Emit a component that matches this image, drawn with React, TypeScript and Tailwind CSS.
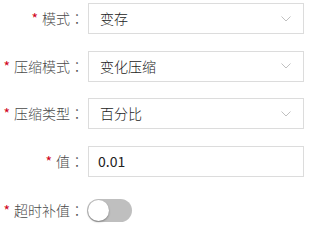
const font = { fontFamily: '"Noto Sans CJK SC", "Noto Sans", sans-serif' }

function Label({ text }: { text: string }) {
  return (
    <label className="w-[88px] shrink-0 text-right pr-1 text-[14px] font-light text-[#4a4a4a] whitespace-nowrap">
      <span className="text-[#d0021b] font-normal mr-1">*</span>
      {text}
      <span style={{ fontFamily: '"Noto Sans CJK TC", sans-serif' }}>：</span>
    </label>
  )
}

function SelectBox({ value }: { value: string }) {
  return (
    <div className="flex items-center justify-between w-[216px] h-[31px] border border-[#dcdcdc] bg-white pl-[11px] pr-[12px] text-[14px] font-light text-[#222]">
      <span>{value}</span>
      <svg width="10" height="6" viewBox="0 0 10 6" fill="none">
        <path d="M0.5 0.5 L5 5 L9.5 0.5" stroke="#c0c0c0" strokeWidth="1" />
      </svg>
    </div>
  )
}

export default function App() {
  return (
    <div className="w-[310px] h-[227px] bg-white pt-[3px] flex flex-col gap-[16.67px]" style={font}>
      <div className="flex items-center">
        <Label text="模式" />
        <SelectBox value="变存" />
      </div>
      <div className="flex items-center">
        <Label text="压缩模式" />
        <SelectBox value="变化压缩" />
      </div>
      <div className="flex items-center">
        <Label text="压缩类型" />
        <SelectBox value="百分比" />
      </div>
      <div className="flex items-center">
        <Label text="值" />
        <div className="flex items-center w-[216px] h-[31px] border border-[#dcdcdc] bg-white pl-[9px] text-[14px] text-[#222]">
          0.01
        </div>
      </div>
      <div className="flex items-center mt-[5px]">
        <Label text="超时补值" />
        <div className="relative w-[45px] h-[23px] -ml-[1px] rounded-full bg-[#bfbfbf]">
          <span className="absolute left-[1px] top-[1px] w-[21px] h-[21px] rounded-full bg-white shadow-[0_1px_2px_rgba(0,0,0,0.35)]" />
        </div>
      </div>
    </div>
  )
}
